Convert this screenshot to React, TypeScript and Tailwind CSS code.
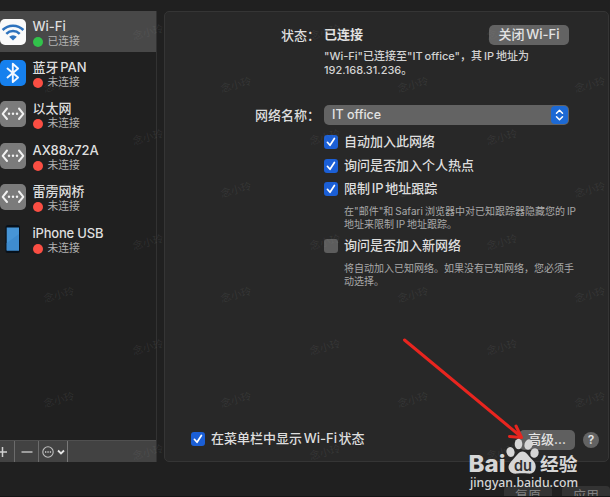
import type { ReactNode } from 'react';

type Kind = 'wifi' | 'bluetooth' | 'ethernet' | 'phone';

const services: { name: string; kind: Kind; on?: boolean }[] = [
  { name: 'Wi-Fi', kind: 'wifi', on: true },
  { name: '蓝牙 PAN', kind: 'bluetooth' },
  { name: '以太网', kind: 'ethernet' },
  { name: 'AX88x72A', kind: 'ethernet' },
  { name: '雷雳网桥', kind: 'ethernet' },
  { name: 'iPhone USB', kind: 'phone' },
];

function ServiceIcon({ kind }: { kind: Kind }) {
  if (kind === 'wifi')
    return (
      <svg width="26" height="26" viewBox="0 0 26 26" className="shrink-0">
        <rect width="26" height="26" rx="5" fill="#fafafa" />
        <g fill="none" stroke="#2d72bd" strokeWidth="2.5">
          <path d="M2.6 11a14.6 14.6 0 0 1 20.8 0" />
          <path d="M6.3 14.8a9.6 9.6 0 0 1 13.4 0" />
        </g>
        <path d="M9.2 17.8a5.4 5.4 0 0 1 7.6 0L13 21.6z" fill="#2d72bd" />
      </svg>
    );
  if (kind === 'bluetooth')
    return (
      <svg width="26" height="26" viewBox="0 0 26 26" className="shrink-0">
        <rect width="26" height="26" rx="5" fill="#1680ee" />
        <path d="M7.5 8.5l10.6 9-5.3 4.6V3.8l5.3 4.7-10.6 9" fill="none" stroke="#f4f8ff" strokeWidth="1.9" strokeLinejoin="round" strokeLinecap="round" />
      </svg>
    );
  if (kind === 'ethernet')
    return (
      <svg width="26" height="26" viewBox="0 0 26 26" className="shrink-0">
        <rect width="26" height="26" rx="5" fill="#7b7b7b" />
        <path d="M7 7.5L2.7 12.8 7 18M19 7.5l4.3 5.3L19 18" fill="none" stroke="#f2f2f2" strokeWidth="2" strokeLinecap="round" strokeLinejoin="round" />
        <g fill="#f2f2f2">
          <circle cx="9" cy="12.8" r="1.2" />
          <circle cx="13" cy="12.8" r="1.2" />
          <circle cx="17" cy="12.8" r="1.2" />
        </g>
      </svg>
    );
  return (
    <svg width="26" height="28" viewBox="0 0 26 28" className="shrink-0">
      <rect x="5.5" y="0" width="14.5" height="28" rx="2.5" fill="#07101a" />
      <rect x="6.7" y="2.5" width="12.3" height="23" fill="#4795d6" />
      <path d="M6.7 18L19 9v16.5H6.7z" fill="#3f8ccf" />
    </svg>
  );
}

function Check({ on = true }: { on?: boolean }) {
  return (
    <span className={`flex h-[14px] w-[14px] shrink-0 items-center justify-center rounded-[3px] ${on ? 'bg-[#1b5fd6]' : 'bg-[#5d5d5d]'}`}>
      {on && (
        <svg width="12" height="12" viewBox="0 0 12 12">
          <path d="M2.4 6.3l2.6 3 4.4-6.8" fill="none" stroke="#fff" strokeWidth="1.7" strokeLinecap="round" strokeLinejoin="round" />
        </svg>
      )}
    </span>
  );
}

function Option({ children, on = true }: { children: ReactNode; on?: boolean }) {
  return (
    <div className="flex h-5 items-center gap-1.5">
      <Check on={on} />
      <span className="text-[13px] font-medium text-[#dedede]">{children}</span>
    </div>
  );
}

function Sidebar() {
  return (
    <div className="flex h-[451px] w-[157px] shrink-0 flex-col border-r border-[#323232]">
      <div className="flex flex-1 flex-col">
        {services.map((s) => (
          <div key={s.name} className={`flex h-[41.4px] items-center gap-[6.5px] ${s.on ? 'bg-[#484848]' : ''}`}>
            <ServiceIcon kind={s.kind} />
            <div className="flex flex-col pt-1">
              <span className={`h-4 text-[13px] leading-4 font-medium text-[#dedede] ${s.kind === 'phone' ? 'tracking-[-0.2px] [word-spacing:0px]' : ''}`}>{s.name}</span>
              <span className="flex h-4 items-center gap-[5px]">
                <i className={`h-[10px] w-[10px] rounded-full ${s.on ? 'bg-[#32c24b]' : 'bg-[#fa4e43]'}`} />
                <span className="text-[10.8px] leading-4 text-[#b2b2b2]">{s.on ? '已连接' : '未连接'}</span>
              </span>
            </div>
          </div>
        ))}
      </div>
      <div className="flex h-[22px] border-t border-[#505050] bg-[#424242]">
        <div className="flex w-[15px] items-center border-r border-[#6b6b6b]">
          <svg width="8" height="12" viewBox="0 0 8 12"><path d="M0 6h7M2.5 1v10" stroke="#d0d0d0" strokeWidth="1.5" /></svg>
        </div>
        <div className="flex w-6 items-center justify-center border-r border-[#6b6b6b]">
          <svg width="12" height="12" viewBox="0 0 12 12"><path d="M.5 6h11" stroke="#b4b4b4" strokeWidth="1.6" /></svg>
        </div>
        <div className="flex w-[29px] items-center justify-center gap-[3px] border-r border-[#787878]">
          <svg width="12" height="12" viewBox="0 0 12 12">
            <circle cx="6" cy="6" r="5.2" fill="none" stroke="#c0c0c0" strokeWidth="1.1" />
            <path d="M3 6h1.3M5.4 6h1.3M7.8 6h1.3" stroke="#d0d0d0" strokeWidth="1.3" />
          </svg>
          <svg width="8" height="6" viewBox="0 0 8 6"><path d="M1 1.5l3 3 3-3" fill="none" stroke="#e4e4e4" strokeWidth="1.8" /></svg>
        </div>
      </div>
    </div>
  );
}

function Panel() {
  return (
    <div className="flex h-[451px] w-[445px] shrink-0 flex-col rounded-[5px] border border-[#353535] bg-[#282828]">
      <div className="flex pt-[13px]">
        <div className="w-[159px] shrink-0 text-[13px] text-[#dedede]">
          <div className="h-5 pl-[116px] leading-5 font-medium">状态：</div>
          <div className="mt-[60px] h-5 pl-[90px] leading-5 font-medium">网络名称：</div>
        </div>
        <div className="flex w-[260px] flex-col">
          <div className="flex h-5 w-[245px] items-center justify-between">
            <span className="text-[13px] font-bold text-[#e2e2e2]">已连接</span>
            <span className="flex h-5 w-20 items-center justify-center rounded-[5px] bg-[#636363] text-[13px] font-medium text-[#e4e4e4]">关闭 Wi-Fi</span>
          </div>
          <div className="mt-[4px] text-[11px] leading-[14px] font-medium whitespace-nowrap text-[#d2d2d2]">
            <div className="[word-spacing:-1px]">"Wi-Fi"已连接至"IT office"，其 IP 地址为</div>
            <div>192.168.31.236。</div>
          </div>
          <div className="mt-[28px] flex h-5 w-[245px] items-center justify-between rounded-[5px] bg-[#636363] pr-px pl-2">
            <span className="text-[12.5px] font-medium text-[#e2e2e2] [word-spacing:0px]">IT office</span>
            <span className="flex h-[18px] w-[17px] items-center justify-center rounded-[4px] bg-[#1c69d4]">
              <svg width="9" height="12" viewBox="0 0 9 12">
                <path d="M1.5 4.3l3-3 3 3M1.5 7.7l3 3 3-3" fill="none" stroke="#fff" strokeWidth="1.5" strokeLinecap="round" strokeLinejoin="round" />
              </svg>
            </span>
          </div>
          <div className="mt-[7px] flex flex-col gap-[3.5px]">
            <Option>自动加入此网络</Option>
            <Option>询问是否加入个人热点</Option>
            <Option>限制 IP 地址跟踪</Option>
          </div>
          <div className="mt-[6px] pl-5 text-[10px] leading-[13px] whitespace-nowrap text-[#a8a8a8] [word-spacing:-0.8px]">
            <div>在"邮件"和 Safari 浏览器中对已知跟踪器隐藏您的 IP</div>
            <div>地址来限制 IP 地址跟踪。</div>
          </div>
          <div className="mt-[5px]"><Option on={false}>询问是否加入新网络</Option></div>
          <div className="mt-[6px] pl-5 text-[10px] leading-[13px] whitespace-nowrap text-[#a8a8a8]">
            <div>将自动加入已知网络。如果没有已知网络，您必须手</div>
            <div>动选择。</div>
          </div>
        </div>
      </div>
      <div className="mt-auto mb-[12px] flex h-5 items-center pl-[26px]">
        <Option>在菜单栏中显示 Wi-Fi 状态</Option>
        <span className="mt-0.5 ml-auto flex h-5 w-14 shrink-0 items-center justify-center rounded-[5px] bg-[#5f5f5f] text-[13px] font-medium text-[#e4e4e4]">高级...</span>
        <span className="mt-0.5 mr-[9px] ml-2 flex h-4 w-4 items-center justify-center rounded-full bg-[#636363] text-[12px] font-semibold text-[#e4e4e4]">?</span>
      </div>
    </div>
  );
}

const marks: number[][] = [];
for (let row = 0; row < 9; row++) {
  for (let col = 0; col < 4; col++) {
    const x = (row % 2 ? 59 : 148) + col * 177;
    if (x < 600) marks.push([x, 32 + row * 52.5]);
  }
}

export default function App() {
  return (
    <div className="relative h-[497px] w-[610px] overflow-hidden border-b border-[#141414] bg-[#202020] font-[Inter,'Noto_Sans_CJK_SC',sans-serif] [word-spacing:-1.8px] [font-feature-settings:'calt'_0]">
      <div className="flex gap-[7px] pt-[11px]">
        <Sidebar />
        <Panel />
      </div>
      <div className="mt-[24px] flex gap-[10px] pl-[504px] text-[13px] leading-[18px] text-[#808080]">
        <span className="h-5 w-12 shrink-0 rounded-[4px] bg-[#333] text-center">复原</span>
        <span className="h-5 w-12 shrink-0 rounded-[4px] bg-[#333] text-center">应用</span>
      </div>

      {/* repeated diagonal watermark */}
      <svg className="pointer-events-none absolute inset-0" width="610" height="497">
        <g fill="#909090" fillOpacity="0.15" fontSize="10.5" textAnchor="middle">
          {marks.map(([x, y]) => (
            <text key={`${x}-${y}`} x={x} y={y + 4} transform={`rotate(-15 ${x} ${y})`}>念小玲</text>
          ))}
        </g>
      </svg>

      {/* arrow and site logo lie over the window */}
      <svg className="pointer-events-none absolute inset-0" width="610" height="497">
        <g fill="none" stroke="#e8251f" strokeWidth="3" strokeLinecap="round">
          <path d="M404.5 340L519 435" />
          <path d="M516 426L521.5 437.5L509.5 436.5" strokeLinejoin="round" />
        </g>
        <g fill="#d6d6d6">
          <text x="468.5" y="472" fontSize="23" fontWeight="800" textLength="37" lengthAdjust="spacingAndGlyphs">Bai</text>
          <ellipse cx="510.5" cy="452" rx="4" ry="5" transform="rotate(-15 510.5 452)" />
          <ellipse cx="518.5" cy="444" rx="3.8" ry="5.3" />
          <ellipse cx="528.5" cy="444.5" rx="4" ry="5.3" transform="rotate(15 528.5 444.5)" />
          <ellipse cx="534.5" cy="453" rx="4.1" ry="4.8" transform="rotate(20 534.5 453)" />
          <path d="M522.5 451.5c4 0 5.5 4 8.5 7s5.5 5 4.5 10-5 5.5-8 5-7-.5-10 0-7 0-8.5-4 1-7 4-10 5.500-8 9.500-8z" />
          <text x="514" y="470.5" fontSize="15" fontWeight="600" fill="#303030" textLength="18" lengthAdjust="spacingAndGlyphs">du</text>
          <text x="540" y="470.5" fontSize="18.5" fontWeight="700" textLength="37.5" lengthAdjust="spacingAndGlyphs">经验</text>
          <text x="470" y="487" fontSize="13" fontFamily="Noto Sans, sans-serif" fontWeight="500" textLength="108" lengthAdjust="spacingAndGlyphs">jingyan.baidu.com</text>
        </g>
      </svg>
    </div>
  );
}
